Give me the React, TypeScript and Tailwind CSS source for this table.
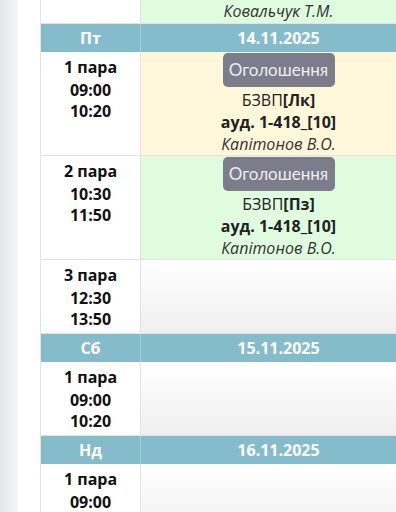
import React from "react";

const font = { fontFamily: '"Open Sans", "Liberation Sans", sans-serif' };

function Header({ day, date }: { day: string; date: string }) {
  return (
    <div className="flex shrink-0 h-[28px] bg-[#85bccb] text-white font-bold text-[16px]">
      <div className="w-[100px] shrink-0 border-r border-[#a9d2dc] flex items-center justify-center">{day}</div>
      <div className="flex-1 flex items-center justify-center">{date}</div>
    </div>
  );
}

function Left({ n, a, b }: { n: string; a: string; b: string }) {
  return (
    <div className="w-[100px] shrink-0 border-r border-[#e3e3e3] bg-white pt-[5px] pb-[3px] flex flex-col items-center font-bold text-[16px] leading-[21px] text-[#111]">
      <div className="mb-[2px]">{n}</div>
      <div>{a}</div>
      <div>{b}</div>
    </div>
  );
}

function Lesson({ bg, type }: { bg: string; type: string }) {
  return (
    <div className={`flex-1 ${bg} pt-[1px] flex flex-col items-center text-[16px] leading-[22px] text-[#222]`}>
      <div
        className="h-[34px] w-[112px] rounded-[5px] bg-[#7d7c8b] text-[#ececf0] flex items-center justify-center text-[17px]"
        style={{ fontFamily: 'Lato, "Open Sans", sans-serif' }}
      >
        Оголошення
      </div>
      <div className="mt-[2px]">
        БЗВП<span className="font-bold">[{type}]</span>
      </div>
      <div className="font-bold">ауд. 1-418_[10]</div>
      <div className="italic text-[#333]">Капітонов В.О.</div>
    </div>
  );
}

function Empty() {
  return <div className="flex-1 bg-gradient-to-b from-white to-[#efefef]" />;
}

export default function App() {
  return (
    <div className="w-[396px] h-[512px] overflow-hidden bg-white flex" style={font}>
      <div className="w-[18px] shrink-0 bg-gradient-to-r from-[#e4e6ec] to-[#f4f5f8]" />
      <div className="w-[22px] shrink-0 bg-white" />
      <div className="w-[376px] shrink-0 border-l border-[#e3e3e3] flex flex-col">
        <div className="flex shrink-0 h-[24px] border-b border-[#e3e3e3]">
          <div className="w-[100px] shrink-0 border-r border-[#e3e3e3] bg-white" />
          <div className="flex-1 bg-[#e0fcdf] flex items-end justify-center text-[16px] leading-[22px] italic text-[#333] pb-[1px]">
            Ковальчук Т.М.
          </div>
        </div>
        <Header day="Пт" date="14.11.2025" />
        <div className="flex shrink-0 border-b border-[#e3e3e3]">
          <Left n="1 пара" a="09:00" b="10:20" />
          <Lesson bg="bg-[#fff7da]" type="Лк" />
        </div>
        <div className="flex shrink-0 border-b border-[#e3e3e3]">
          <Left n="2 пара" a="10:30" b="11:50" />
          <Lesson bg="bg-[#e0fcdf]" type="Пз" />
        </div>
        <div className="flex shrink-0 border-b border-[#e3e3e3]">
          <Left n="3 пара" a="12:30" b="13:50" />
          <Empty />
        </div>
        <Header day="Сб" date="15.11.2025" />
        <div className="flex shrink-0 border-b border-[#e3e3e3]">
          <Left n="1 пара" a="09:00" b="10:20" />
          <Empty />
        </div>
        <Header day="Нд" date="16.11.2025" />
        <div className="flex shrink-0 border-b border-[#e3e3e3]">
          <Left n="1 пара" a="09:00" b="10:20" />
          <Empty />
        </div>
      </div>
    </div>
  );
}
